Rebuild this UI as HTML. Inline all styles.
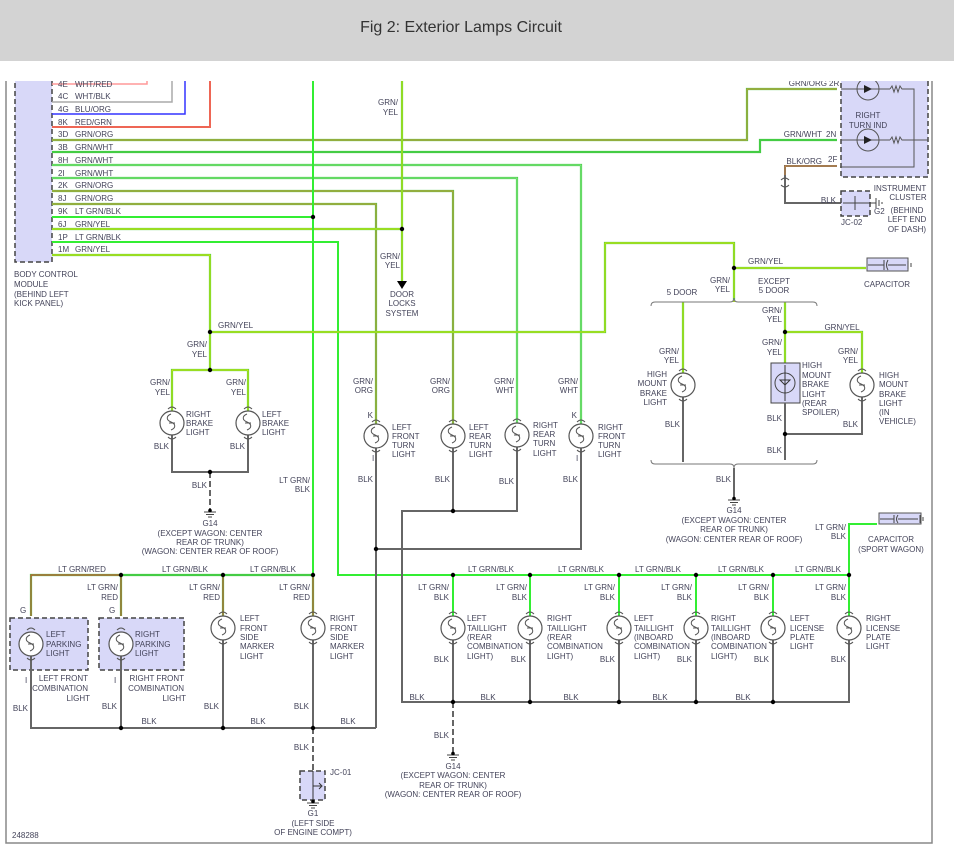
<!DOCTYPE html>
<html><head><meta charset="utf-8"><style>
html,body{margin:0;padding:0;background:#fff;width:954px;height:860px;overflow:hidden}
#hdr{position:absolute;left:0;top:0;width:954px;height:61px;background:#d3d3d3}
#hdr div{position:absolute;left:0;width:922px;top:19px;text-align:center;font:16px "Liberation Sans",sans-serif;color:#333}
svg{position:absolute;left:0;top:0}
text{font-family:"Liberation Sans",sans-serif;font-size:8px;fill:#44445a}
.e{text-anchor:end}.m{text-anchor:middle}
polyline,line,path{fill:none}
.g{stroke:#4c4;stroke-width:2.2}
.lg{stroke:#3e3;stroke-width:2}
.oy{stroke:#ee0;stroke-width:0.9}
.oo{stroke:#e0903a;stroke-width:0.9}
.ow{stroke:#9e9;stroke-width:0.8}
.or{stroke:#e33;stroke-width:0.9}
.k{stroke:#666;stroke-width:2}
.kd{stroke:#666;stroke-width:2;stroke-dasharray:6,3}
.lamp{fill:#fff;stroke:#555;stroke-width:1.2}
.bx{fill:#d8d8f8;stroke:#444;stroke-width:1.5;stroke-dasharray:5,3}
.dot{fill:#000}
</style></head><body>
<div id="hdr"><div>Fig 2: Exterior Lamps Circuit</div></div>
<svg width="954" height="860" viewBox="0 0 954 860">
<defs>
<clipPath id="c"><rect x="0" y="81" width="954" height="779"/></clipPath>
<g id="L">
<circle cx="0" cy="0" r="12" class="lamp"/>
<path d="M-1,-9 c-5,2 -5,6 0,8 c5,2 5,6 0,8 M-3,0 h6" stroke="#555" stroke-width="1"/>
<path d="M-4,-14 q4,-4 8,0 M-4,14 q4,4 8,0" stroke="#555" stroke-width="1"/>
</g>
<g id="G"><line x1="-6" y1="0" x2="6" y2="0" stroke="#444"/><line x1="-4" y1="2.5" x2="4" y2="2.5" stroke="#444"/><line x1="-2" y1="5" x2="2" y2="5" stroke="#444"/><circle cx="0" cy="-1.5" r="1.8" fill="#000"/></g>
</defs>
<g clip-path="url(#c)">
<!-- frame -->
<polyline points="6,80 6,843 932,843 932,80" stroke="#888" stroke-width="1.5"/>
<!-- BCM -->
<rect x="15" y="70" width="37" height="192" class="bx"/>
<text x="14" y="277">BODY CONTROL</text><text x="14" y="287">MODULE</text><text x="14" y="297">(BEHIND LEFT</text><text x="14" y="306">KICK PANEL)</text>
<!-- top wires -->
<polyline points="52,84 147,84 147,70" stroke="#f99" stroke-width="1.5"/>
<polyline points="52,102 172,102 172,70" stroke="#aaa" stroke-width="1.5"/>
<polyline points="52,114 185,114 185,70" stroke="#33f" stroke-width="1.5"/>
<polyline points="52,127 210,127 210,70" stroke="#e65" stroke-width="2"/>
<polyline points="52,140 747,140 747,89 837,89" class="g"/><polyline points="52,140 747,140 747,89 837,89" class="oo"/>
<polyline points="52,152 760,152 760,140 837,140" class="g"/>
<polyline points="52,165 581,165 581,424" class="g"/><polyline points="52,165 581,165 581,424" class="ow"/>
<polyline points="52,178 517,178 517,423" class="g"/><polyline points="52,178 517,178 517,423" class="ow"/>
<polyline points="52,191 453,191 453,424" class="g"/><polyline points="52,191 453,191 453,424" class="oo"/>
<polyline points="52,204 376,204 376,424" class="g"/><polyline points="52,204 376,204 376,424" class="oo"/>
<polyline points="52,217 313,217" class="lg"/>
<polyline points="52,229 402,229" class="g"/><polyline points="52,229 402,229" class="oy"/>
<polyline points="52,242 338,242 338,575 849,575 849,616" class="lg"/>
<polyline points="849,575 849,524 877,524" class="lg"/>
<polyline points="52,255 210,255 210,370" class="g"/><polyline points="52,255 210,255 210,370" class="oy"/>
<line x1="313" y1="70" x2="313" y2="616" class="lg"/>
<polyline points="402,70 402,281" class="g"/><polyline points="402,70 402,281" class="oy"/>
<polygon points="397,281 407,281 402,289" fill="#000"/>
<polyline points="210,332 605,332 605,243 734,243 734,302" class="g"/><polyline points="210,332 605,332 605,243 734,243 734,302" class="oy"/>
<polyline points="734,268 866,268" class="g"/><polyline points="734,268 866,268" class="oy"/>
<polyline points="172,411 172,370 248,370 248,411" class="g"/><polyline points="172,411 172,370 248,370 248,411" class="oy"/>
<polyline points="683,302 683,373" class="g"/><polyline points="683,302 683,373" class="oy"/>
<polyline points="785,302 785,332 785,363" class="g"/><polyline points="785,302 785,363" class="oy"/>
<polyline points="785,332 862,332 862,373" class="g"/><polyline points="785,332 862,332 862,373" class="oy"/>
<!-- cluster -->
<rect x="841" y="72" width="87" height="105" class="bx"/>
<circle cx="868" cy="89" r="11" fill="none" stroke="#555"/><circle cx="868" cy="140" r="11" fill="none" stroke="#555"/>
<polyline points="841,89 880,89 M0,0" stroke="#555"/>
<line x1="841" y1="89" x2="890" y2="89" stroke="#555"/><line x1="841" y1="140" x2="890" y2="140" stroke="#555"/>
<path d="M890,89 l2,-3 l2,6 l2,-6 l2,6 l2,-6 l2,3 h12 v78 h-74 M890,140 l2,-3 l2,6 l2,-6 l2,6 l2,-6 l2,3 h26" stroke="#555"/>
<polygon points="864,85 872,89 864,93" fill="#222"/><polygon points="864,136 872,140 864,144" fill="#222"/>
<text x="868" y="118" class="m">RIGHT</text><text x="868" y="128" class="m">TURN IND</text>
<polyline points="837,166 785,166 785,203 841,203" stroke="#666" stroke-width="2"/><polyline points="837,166 785,166 785,175" stroke="#e0903a" stroke-width="0.9"/>
<path d="M781,180 q4,-4 8,0 M781,185 q4,4 8,0" stroke="#555"/>
<rect x="841" y="191" width="29" height="25" class="bx"/>
<line x1="843" y1="203" x2="876" y2="203" stroke="#444"/><line x1="855" y1="196" x2="855" y2="210" stroke="#444"/>
<path d="M876,198 v10 M879,200 v6 M882,202 v2" stroke="#444"/>
<text x="827" y="86" class="e">GRN/ORG</text><text x="829" y="86">2R</text>
<text x="822" y="137" class="e">GRN/WHT</text><text x="826" y="137">2N</text>
<text x="822" y="164" class="e">BLK/ORG</text><text x="828" y="162">2F</text>
<text x="836" y="203" class="e">BLK</text><text x="874" y="214">G2</text><text x="841" y="225">JC-02</text>
<text x="900" y="191" class="m">INSTRUMENT</text><text x="908" y="200" class="m">CLUSTER</text><text x="907" y="213" class="m">(BEHIND</text><text x="907" y="222" class="m">LEFT END</text><text x="907" y="232" class="m">OF DASH)</text>
<!-- capacitor upper -->
<rect x="867" y="258" width="41" height="13" fill="#d8d8f8" stroke="#555"/>
<path d="M868,265 h16 M884,260 v10 M888,260 q-3,5 0,10 M888,265 h18 M908,261 v8 M911,263 v4" stroke="#444"/>
<text x="887" y="287" class="m">CAPACITOR</text>
<text x="748" y="264">GRN/YEL</text>
<text x="730" y="283" class="e">GRN/</text><text x="730" y="292" class="e">YEL</text>
<text x="774" y="284" class="m">EXCEPT</text><text x="774" y="293" class="m">5 DOOR</text>
<text x="682" y="295" class="m">5 DOOR</text>
<path d="M651,306 q0,-4 4,-4 h75 q4,0 4,-4 q0,4 4,4 h75 q4,0 4,4" stroke="#777"/>
<path d="M651,460 q0,4 4,4 h75 q4,0 4,4 q0,-4 4,-4 h75 q4,0 4,-4" stroke="#777"/>
<!-- left top texts -->
<g>
<text x="58" y="87">4E</text><text x="75" y="87">WHT/RED</text>
<text x="58" y="99">4C</text><text x="75" y="99">WHT/BLK</text>
<text x="58" y="112">4G</text><text x="75" y="112">BLU/ORG</text>
<text x="58" y="125">8K</text><text x="75" y="125">RED/GRN</text>
<text x="58" y="137">3D</text><text x="75" y="137">GRN/ORG</text>
<text x="58" y="150">3B</text><text x="75" y="150">GRN/WHT</text>
<text x="58" y="163">8H</text><text x="75" y="163">GRN/WHT</text>
<text x="58" y="176">2I</text><text x="75" y="176">GRN/WHT</text>
<text x="58" y="188">2K</text><text x="75" y="188">GRN/ORG</text>
<text x="58" y="201">8J</text><text x="75" y="201">GRN/ORG</text>
<text x="58" y="214">9K</text><text x="75" y="214">LT GRN/BLK</text>
<text x="58" y="227">6J</text><text x="75" y="227">GRN/YEL</text>
<text x="58" y="240">1P</text><text x="75" y="240">LT GRN/BLK</text>
<text x="58" y="252">1M</text><text x="75" y="252">GRN/YEL</text>
</g>
<text x="398" y="105" class="e">GRN/</text><text x="398" y="115" class="e">YEL</text>
<text x="400" y="259" class="e">GRN/</text><text x="400" y="268" class="e">YEL</text>
<text x="402" y="297" class="m">DOOR</text><text x="402" y="306" class="m">LOCKS</text><text x="402" y="316" class="m">SYSTEM</text>
<text x="218" y="328">GRN/YEL</text>
<text x="207" y="347" class="e">GRN/</text><text x="207" y="357" class="e">YEL</text>
<text x="170" y="385" class="e">GRN/</text><text x="170" y="395" class="e">YEL</text>
<text x="246" y="385" class="e">GRN/</text><text x="246" y="395" class="e">YEL</text>
<text x="186" y="417">RIGHT</text><text x="186" y="426">BRAKE</text><text x="186" y="435">LIGHT</text>
<text x="262" y="417">LEFT</text><text x="262" y="426">BRAKE</text><text x="262" y="435">LIGHT</text>
<text x="169" y="449" class="e">BLK</text><text x="245" y="449" class="e">BLK</text><text x="207" y="488" class="e">BLK</text>
<polyline points="172,435 172,472 248,472 248,435" class="k"/>
<line x1="210" y1="472" x2="210" y2="510" class="kd"/>
<use href="#G" x="210" y="512"/>
<text x="210" y="526" class="m">G14</text><text x="210" y="536" class="m">(EXCEPT WAGON: CENTER</text><text x="210" y="545" class="m">REAR OF TRUNK)</text><text x="210" y="554" class="m">(WAGON: CENTER REAR OF ROOF)</text>
<text x="310" y="483" class="e">LT GRN/</text><text x="310" y="492" class="e">BLK</text>
<!-- turn lights -->
<text x="373" y="384" class="e">GRN/</text><text x="373" y="393" class="e">ORG</text><text x="373" y="418" class="e">K</text>
<text x="392" y="430">LEFT</text><text x="392" y="439">FRONT</text><text x="392" y="448">TURN</text><text x="392" y="457">LIGHT</text><text x="372" y="461">I</text>
<text x="450" y="384" class="e">GRN/</text><text x="450" y="393" class="e">ORG</text>
<text x="469" y="430">LEFT</text><text x="469" y="439">REAR</text><text x="469" y="448">TURN</text><text x="469" y="457">LIGHT</text>
<text x="514" y="384" class="e">GRN/</text><text x="514" y="393" class="e">WHT</text>
<text x="533" y="428">RIGHT</text><text x="533" y="437">REAR</text><text x="533" y="446">TURN</text><text x="533" y="456">LIGHT</text>
<text x="578" y="384" class="e">GRN/</text><text x="578" y="393" class="e">WHT</text><text x="577" y="418" class="e">K</text>
<text x="598" y="430">RIGHT</text><text x="598" y="439">FRONT</text><text x="598" y="448">TURN</text><text x="598" y="457">LIGHT</text><text x="576" y="461">I</text>
<text x="373" y="482" class="e">BLK</text><text x="450" y="482" class="e">BLK</text><text x="514" y="484" class="e">BLK</text><text x="578" y="482" class="e">BLK</text>
<polyline points="376,448 376,728" class="k"/>
<polyline points="453,448 453,511" class="k"/>
<polyline points="517,447 517,511 402,511 402,702 849,702 849,640" class="k"/>
<polyline points="581,448 581,549 376,549" class="k"/>
<!-- high mount -->
<text x="782" y="313" class="e">GRN/</text><text x="782" y="322" class="e">YEL</text>
<text x="842" y="330" class="m">GRN/YEL</text>
<text x="782" y="345" class="e">GRN/</text><text x="782" y="355" class="e">YEL</text>
<text x="679" y="354" class="e">GRN/</text><text x="679" y="363" class="e">YEL</text>
<text x="858" y="354" class="e">GRN/</text><text x="858" y="363" class="e">YEL</text>
<text x="667" y="377" class="e">HIGH</text><text x="667" y="386" class="e">MOUNT</text><text x="667" y="396" class="e">BRAKE</text><text x="667" y="405" class="e">LIGHT</text>
<text x="802" y="368">HIGH</text><text x="802" y="378">MOUNT</text><text x="802" y="387">BRAKE</text><text x="802" y="397">LIGHT</text><text x="802" y="406">(REAR</text><text x="802" y="415">SPOILER)</text>
<text x="879" y="378">HIGH</text><text x="879" y="387">MOUNT</text><text x="879" y="397">BRAKE</text><text x="879" y="406">LIGHT</text><text x="879" y="415">(IN</text><text x="879" y="424">VEHICLE)</text>
<rect x="771" y="363" width="29" height="40" fill="#d8d8f8" stroke="#444"/>
<circle cx="785" cy="383" r="10" fill="none" stroke="#444"/>
<path d="M785,365 v36 M780,380 l5,5 l5,-5z" stroke="#333" fill="#333"/>
<polyline points="683,397 683,462" class="k"/>
<polyline points="785,403 785,460" class="k"/>
<polyline points="862,397 862,434 785,434" class="k"/>
<line x1="734" y1="468" x2="734" y2="497" class="k"/>
<use href="#G" x="734" y="500"/>
<text x="680" y="427" class="e">BLK</text><text x="782" y="421" class="e">BLK</text><text x="858" y="427" class="e">BLK</text><text x="782" y="453" class="e">BLK</text><text x="731" y="482" class="e">BLK</text>
<text x="734" y="513" class="m">G14</text><text x="734" y="523" class="m">(EXCEPT WAGON: CENTER</text><text x="734" y="532" class="m">REAR OF TRUNK)</text><text x="734" y="542" class="m">(WAGON: CENTER REAR OF ROOF)</text>
<text x="846" y="530" class="e">LT GRN/</text><text x="846" y="539" class="e">BLK</text>
<rect x="879" y="513" width="42" height="11" fill="#d8d8f8" stroke="#555"/>
<path d="M880,519 h14 M894,515 v8 M898,515 q-3,4 0,8 M898,519 h20 M920,515 v8 M923,517 v4" stroke="#444"/>
<text x="891" y="542" class="m">CAPACITOR</text><text x="891" y="552" class="m">(SPORT WAGON)</text>
<!-- bottom left -->
<polyline points="31,616 31,575 313,575" class="g"/><polyline points="31,616 31,575 121,575 121,616" class="or"/>
<line x1="121" y1="575" x2="121" y2="616" class="g"/><line x1="121" y1="575" x2="121" y2="616" class="or"/>
<line x1="223" y1="575" x2="223" y2="616" class="g"/><line x1="223" y1="575" x2="223" y2="616" class="or"/>
<line x1="313" y1="575" x2="313" y2="616" class="g"/><line x1="313" y1="575" x2="313" y2="616" class="or"/>
<text x="82" y="572" class="m">LT GRN/RED</text><text x="185" y="572" class="m">LT GRN/BLK</text><text x="273" y="572" class="m">LT GRN/BLK</text>
<text x="118" y="590" class="e">LT GRN/</text><text x="118" y="600" class="e">RED</text>
<text x="220" y="590" class="e">LT GRN/</text><text x="220" y="600" class="e">RED</text>
<text x="310" y="590" class="e">LT GRN/</text><text x="310" y="600" class="e">RED</text>
<text x="20" y="613">G</text><text x="109" y="613">G</text>
<rect x="10" y="618" width="78" height="52" class="bx"/><rect x="99" y="618" width="85" height="52" class="bx"/>
<text x="46" y="637">LEFT</text><text x="46" y="647">PARKING</text><text x="46" y="656">LIGHT</text>
<text x="135" y="637">RIGHT</text><text x="135" y="647">PARKING</text><text x="135" y="656">LIGHT</text>
<text x="88" y="681" class="e">LEFT FRONT</text><text x="88" y="691" class="e">COMBINATION</text><text x="90" y="701" class="e">LIGHT</text>
<text x="184" y="681" class="e">RIGHT FRONT</text><text x="184" y="691" class="e">COMBINATION</text><text x="186" y="701" class="e">LIGHT</text>
<text x="25" y="683">I</text><text x="114" y="683">I</text>
<text x="240" y="621">LEFT</text><text x="240" y="631">FRONT</text><text x="240" y="640">SIDE</text><text x="240" y="649">MARKER</text><text x="240" y="659">LIGHT</text>
<text x="330" y="621">RIGHT</text><text x="330" y="631">FRONT</text><text x="330" y="640">SIDE</text><text x="330" y="649">MARKER</text><text x="330" y="659">LIGHT</text>
<text x="28" y="711" class="e">BLK</text><text x="117" y="709" class="e">BLK</text><text x="219" y="709" class="e">BLK</text><text x="309" y="709" class="e">BLK</text>
<text x="149" y="724" class="m">BLK</text><text x="258" y="724" class="m">BLK</text><text x="348" y="724" class="m">BLK</text>
<polyline points="31,656 31,728 376,728" class="k"/>
<line x1="121" y1="656" x2="121" y2="728" class="k"/><line x1="223" y1="640" x2="223" y2="728" class="k"/><line x1="313" y1="640" x2="313" y2="728" class="k"/>
<line x1="313" y1="728" x2="313" y2="771" class="kd"/>
<rect x="300" y="771" width="25" height="29" class="bx"/>
<path d="M313,771 v29 M313,786 h8 M319,783 l3,3 l-3,3" stroke="#333"/>
<use href="#G" x="313" y="803"/>
<text x="309" y="750" class="e">BLK</text><text x="330" y="775">JC-01</text>
<text x="313" y="816" class="m">G1</text><text x="313" y="826" class="m">(LEFT SIDE</text><text x="313" y="835" class="m">OF ENGINE COMPT)</text>
<text x="12" y="838">248288</text>
<!-- bottom right -->
<text x="491" y="572" class="m">LT GRN/BLK</text><text x="581" y="572" class="m">LT GRN/BLK</text><text x="658" y="572" class="m">LT GRN/BLK</text><text x="741" y="572" class="m">LT GRN/BLK</text><text x="818" y="572" class="m">LT GRN/BLK</text>
<g class="lg">
<line x1="453" y1="575" x2="453" y2="616"/><line x1="530" y1="575" x2="530" y2="616"/><line x1="619" y1="575" x2="619" y2="616"/><line x1="696" y1="575" x2="696" y2="616"/><line x1="773" y1="575" x2="773" y2="616"/>
</g>
<g class="k">
<line x1="453" y1="640" x2="453" y2="702"/><line x1="530" y1="640" x2="530" y2="702"/><line x1="619" y1="640" x2="619" y2="702"/><line x1="696" y1="640" x2="696" y2="702"/><line x1="773" y1="640" x2="773" y2="702"/>
</g>
<line x1="453" y1="702" x2="453" y2="752" class="kd"/>
<use href="#G" x="453" y="755"/>
<text x="449" y="590" class="e">LT GRN/</text><text x="449" y="600" class="e">BLK</text>
<text x="527" y="590" class="e">LT GRN/</text><text x="527" y="600" class="e">BLK</text>
<text x="615" y="590" class="e">LT GRN/</text><text x="615" y="600" class="e">BLK</text>
<text x="692" y="590" class="e">LT GRN/</text><text x="692" y="600" class="e">BLK</text>
<text x="769" y="590" class="e">LT GRN/</text><text x="769" y="600" class="e">BLK</text>
<text x="846" y="590" class="e">LT GRN/</text><text x="846" y="600" class="e">BLK</text>
<text x="467" y="621">LEFT</text><text x="467" y="631">TAILLIGHT</text><text x="467" y="640">(REAR</text><text x="467" y="649">COMBINATION</text><text x="467" y="659">LIGHT)</text>
<text x="547" y="621">RIGHT</text><text x="547" y="631">TAILLIGHT</text><text x="547" y="640">(REAR</text><text x="547" y="649">COMBINATION</text><text x="547" y="659">LIGHT)</text>
<text x="634" y="621">LEFT</text><text x="634" y="631">TAILLIGHT</text><text x="634" y="640">(INBOARD</text><text x="634" y="649">COMBINATION</text><text x="634" y="659">LIGHT)</text>
<text x="711" y="621">RIGHT</text><text x="711" y="631">TAILLIGHT</text><text x="711" y="640">(INBOARD</text><text x="711" y="649">COMBINATION</text><text x="711" y="659">LIGHT)</text>
<text x="790" y="621">LEFT</text><text x="790" y="631">LICENSE</text><text x="790" y="640">PLATE</text><text x="790" y="649">LIGHT</text>
<text x="866" y="621">RIGHT</text><text x="866" y="631">LICENSE</text><text x="866" y="640">PLATE</text><text x="866" y="649">LIGHT</text>
<text x="449" y="662" class="e">BLK</text><text x="526" y="662" class="e">BLK</text><text x="615" y="662" class="e">BLK</text><text x="692" y="662" class="e">BLK</text><text x="769" y="662" class="e">BLK</text><text x="846" y="662" class="e">BLK</text>
<text x="417" y="700" class="m">BLK</text><text x="488" y="700" class="m">BLK</text><text x="571" y="700" class="m">BLK</text><text x="660" y="700" class="m">BLK</text><text x="743" y="700" class="m">BLK</text>
<text x="449" y="738" class="e">BLK</text>
<text x="453" y="769" class="m">G14</text><text x="453" y="778" class="m">(EXCEPT WAGON: CENTER</text><text x="453" y="788" class="m">REAR OF TRUNK)</text><text x="453" y="797" class="m">(WAGON: CENTER REAR OF ROOF)</text>
<!-- lamps -->
<use href="#L" x="172" y="423"/><use href="#L" x="248" y="423"/>
<use href="#L" x="376" y="436"/><use href="#L" x="453" y="436"/><use href="#L" x="517" y="435"/><use href="#L" x="581" y="436"/>
<use href="#L" x="683" y="385"/><use href="#L" x="862" y="385"/>
<use href="#L" x="31" y="644"/><use href="#L" x="121" y="644"/>
<use href="#L" x="223" y="628"/><use href="#L" x="313" y="628"/>
<use href="#L" x="453" y="628"/><use href="#L" x="530" y="628"/><use href="#L" x="619" y="628"/><use href="#L" x="696" y="628"/><use href="#L" x="773" y="628"/><use href="#L" x="849" y="628"/>
<!-- dots -->
<g class="dot">
<circle cx="313" cy="217" r="2.2"/><circle cx="402" cy="229" r="2.2"/><circle cx="210" cy="332" r="2.2"/><circle cx="210" cy="370" r="2.2"/><circle cx="210" cy="472" r="2.2"/>
<circle cx="734" cy="268" r="2.2"/><circle cx="785" cy="332" r="2.2"/><circle cx="785" cy="434" r="2.2"/>
<circle cx="453" cy="511" r="2.2"/><circle cx="376" cy="549" r="2.2"/>
<circle cx="121" cy="575" r="2.2"/><circle cx="223" cy="575" r="2.2"/><circle cx="313" cy="575" r="2.2"/>
<circle cx="121" cy="728" r="2.2"/><circle cx="223" cy="728" r="2.2"/><circle cx="313" cy="728" r="2.2"/>
<circle cx="453" cy="575" r="2.2"/><circle cx="530" cy="575" r="2.2"/><circle cx="619" cy="575" r="2.2"/><circle cx="696" cy="575" r="2.2"/><circle cx="773" cy="575" r="2.2"/><circle cx="849" cy="575" r="2.2"/>
<circle cx="453" cy="702" r="2.2"/><circle cx="530" cy="702" r="2.2"/><circle cx="619" cy="702" r="2.2"/><circle cx="696" cy="702" r="2.2"/><circle cx="773" cy="702" r="2.2"/>
</g>
</g>
</svg>
</body></html>
